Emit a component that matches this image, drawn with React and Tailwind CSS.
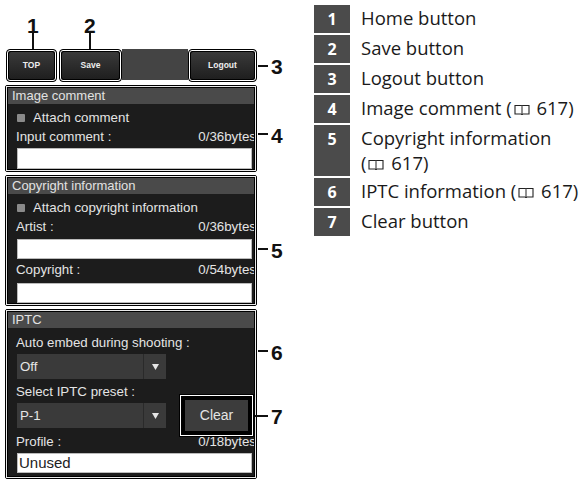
import React from "react";

const UI = { fontFamily: '"Liberation Sans", Arial, sans-serif' };
const LEG = { fontFamily: '"Open Sans", "Noto Sans", sans-serif' };

function Book() {
  return (
    <svg width="16" height="12" viewBox="0 0 16 12" className="mx-[2px] inline-block align-[-1px]">
      <path d="M1 1.5 H7.2 Q8 1.5 8 2.3 Q8 1.5 8.8 1.5 H15 V10 H9 Q8 10 8 11 Q8 10 7 10 H1 Z" fill="none" stroke="#222" strokeWidth="1.1" />
      <path d="M8 2.3 V11" stroke="#222" strokeWidth="1" />
    </svg>
  );
}

function TopButton({ w, label }) {
  return (
    <div className={`h-[33px] rounded-[4px] border-[1.5px] border-black bg-black ${w}`}>
      <div className="h-full rounded-[3px] border border-white bg-black p-[1px]">
        <div className="flex h-full items-center justify-center rounded-[2px] bg-gradient-to-b from-[#3a3a3a] to-[#1f1f1f] text-[8.5px] font-bold text-[#eee]">
          {label}
        </div>
      </div>
    </div>
  );
}

function Section({ title, h, children }) {
  return (
    <div className={`w-[252px] rounded-[2px] border border-black ${h}`}>
      <div className="h-full border border-[#e9e9e9]">
        <div className="flex h-full flex-col overflow-hidden border border-black bg-[#1c1c1c]">
          <div className="h-[16px] shrink-0 bg-[#4a4a4a] pl-[4px] text-[13px] leading-[16px] text-[#e2e2e2]">{title}</div>
          {children}
        </div>
      </div>
    </div>
  );
}

function Check({ label }) {
  return (
    <div className="flex h-[20px] items-center pl-[9px] text-[13.3px] text-[#e4e4e4]">
      <div className="h-[8px] w-[8px] rounded-[1px] bg-[#8a8a8a]" />
      <span className="ml-[8px]">{label}</span>
    </div>
  );
}

function LabelRow({ label, right, cls = "" }) {
  return (
    <div className={`flex h-[18px] items-center justify-between pl-[8px] text-[13.3px] text-[#e4e4e4] ${cls}`}>
      <span>{label}</span>
      {right && <span className="mr-[-2px] whitespace-nowrap">{right}</span>}
    </div>
  );
}

function Input({ cls = "", text }) {
  return (
    <div className={`ml-[9px] mr-[2px] flex h-[20px] items-center border border-[#bbb] bg-white pl-[1px] text-[14px] text-[#222] ${cls}`}>
      {text}
    </div>
  );
}

function Select({ value, cls = "" }) {
  return (
    <div className={`ml-[9px] flex h-[25px] w-[149px] items-center bg-[#3a3a3a] text-[13.3px] text-[#e6e6e6] ${cls}`}>
      <span className="flex-1 pl-[3px]">{value}</span>
      <div className="h-full w-[1px] bg-[#2a2a2a]" />
      <div className="flex w-[22px] items-center justify-center">
        <svg width="7" height="6" viewBox="0 0 7 6"><path d="M0 0 H7 L3.5 6 Z" fill="#e6e6e6" /></svg>
      </div>
    </div>
  );
}

function Callout({ n, cls }) {
  return (
    <div className={`absolute text-[21px] font-bold leading-none text-[#111] ${cls}`}>{n}</div>
  );
}

const legend = [
  { n: "1", t: <>Home button</> },
  { n: "2", t: <>Save button</> },
  { n: "3", t: <>Logout button</> },
  { n: "4", t: <>Image comment (<Book /> 617)</> },
  { n: "5", t: <>Copyright information<br />(<Book /> 617)</>, tall: true },
  { n: "6", t: <>IPTC information (<Book /> 617)</> },
  { n: "7", t: <>Clear button</> },
];

export default function App() {
  return (
    <div className="flex h-[480px] w-[586px] overflow-hidden bg-white">
      <div className="relative w-[314px] shrink-0 pl-[5px] pt-[49px]" style={UI}>
        {/* top bar */}
        <div className="flex w-[252px] items-start pl-[1px]">
          <TopButton w="w-[51px]" label="TOP" />
          <div className="ml-[2px]">
            <TopButton w="w-[63px]" label="Save" />
          </div>
          <div className="h-[31px] flex-1 bg-[#444]" />
          <TopButton w="w-[69px]" label="Logout" />
        </div>

        <div className="mt-[3px] flex flex-col gap-[3px]">
          <Section title="Image comment" h="h-[87px]">
            <div className="pt-[4px]">
              <Check label="Attach comment" />
              <LabelRow label="Input comment :" right="0/36bytes" />
              <Input cls="mt-[2px] h-[21px]" />
            </div>
          </Section>

          <Section title="Copyright information" h="h-[131px]">
            <div className="pt-[4px]">
              <Check label="Attach copyright information" />
              <LabelRow label="Artist :" right="0/36bytes" />
              <Input cls="mt-[3px]" />
              <LabelRow label="Copyright :" right="0/54bytes" cls="mt-[2px]" />
              <Input cls="mt-[4px]" />
            </div>
          </Section>

          <Section title="IPTC" h="h-[170px]">
            <div className="pt-[6px]">
              <LabelRow label="Auto embed during shooting :" />
              <Select value="Off" cls="mt-[2px]" />
              <LabelRow label="Select IPTC preset :" cls="mt-[4px]" />
              <div className="mt-[2px] flex items-center">
                <Select value="P-1" />
                <div className="relative z-10 -my-[9px] ml-[13px] h-[43px] w-[75px] border border-black">
                  <div className="h-full border border-white">
                    <div className="h-full border-[4px] border-black">
                      <div className="flex h-full items-center justify-center bg-[#3c3c3c] text-[14px] text-[#e4e4e4]">Clear</div>
                    </div>
                  </div>
                </div>
              </div>
              <LabelRow label="Profile :" right="0/18bytes" cls="mt-[5px]" />
              <Input cls="mt-[2px] text-[15px]" text="Unused" />
            </div>
          </Section>
        </div>

        {/* callouts */}
        <Callout n="1" cls="left-[27px] top-[15px]" />
        <div className="absolute left-[32px] top-[33px] h-[16px] w-[2px] bg-[#111]" />
        <Callout n="2" cls="left-[84px] top-[15px]" />
        <div className="absolute left-[89px] top-[33px] h-[16px] w-[2px] bg-[#111]" />

        <div className="absolute left-[258px] top-[65px] h-[2px] w-[10px] bg-[#111]" />
        <Callout n="3" cls="left-[271px] top-[56px]" />
        <div className="absolute left-[258px] top-[133px] h-[2px] w-[10px] bg-[#111]" />
        <Callout n="4" cls="left-[271px] top-[125px]" />
        <div className="absolute left-[258px] top-[248px] h-[2px] w-[10px] bg-[#111]" />
        <Callout n="5" cls="left-[271px] top-[240px]" />
        <div className="absolute left-[258px] top-[350px] h-[2px] w-[10px] bg-[#111]" />
        <Callout n="6" cls="left-[271px] top-[342px]" />
        <div className="absolute left-[255px] top-[415px] h-[2px] w-[13px] bg-[#111]" />
        <Callout n="7" cls="left-[271px] top-[406px]" />
      </div>

      <div className="flex flex-col gap-[2px] pt-[5px]" style={LEG}>
        {legend.map((r) => (
          <div key={r.n} className="flex items-start">
            <div className={`flex w-[36px] shrink-0 justify-center bg-[#4b4b4b] pt-[3px] text-[16px] font-bold leading-[22px] text-white ${r.tall ? "h-[51px]" : "h-[28px]"}`}>
              {r.n}
            </div>
            <div className="ml-[11px] whitespace-nowrap text-[18.5px] leading-[25px] text-[#1a1a1a]">{r.t}</div>
          </div>
        ))}
      </div>
    </div>
  );
}
